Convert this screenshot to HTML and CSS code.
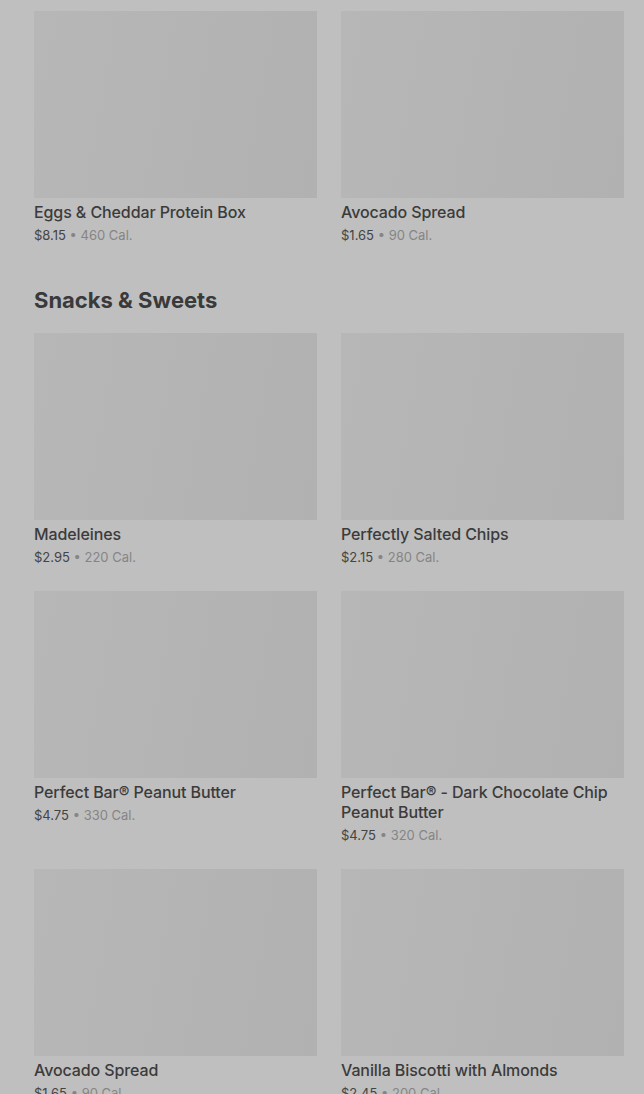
FILE: index.html
```html
<!DOCTYPE html>
<html lang="en">
<head>
    <meta charset="UTF-8">
    <meta name="viewport" content="width=device-width, initial-scale=1.0">
    <title>Menu</title>
    <link rel="stylesheet" href="styles.css">
</head>
<body>
    <div class="menu">
        <section class="section">
            <div class="grid">
                <div class="item">
                    <div class="thumb"></div>
                    <div class="name">Eggs &amp; Cheddar Protein Box</div>
                    <div class="meta"><span class="price">$8.15</span> • 460 Cal.</div>
                </div>
                <div class="item">
                    <div class="thumb"></div>
                    <div class="name">Avocado Spread</div>
                    <div class="meta"><span class="price">$1.65</span> • 90 Cal.</div>
                </div>
            </div>
        </section>

        <section class="section">
            <h2 class="section-title">Snacks &amp; Sweets</h2>
            <div class="grid">
                <div class="item">
                    <div class="thumb"></div>
                    <div class="name">Madeleines</div>
                    <div class="meta"><span class="price">$2.95</span> • 220 Cal.</div>
                </div>
                <div class="item">
                    <div class="thumb"></div>
                    <div class="name">Perfectly Salted Chips</div>
                    <div class="meta"><span class="price">$2.15</span> • 280 Cal.</div>
                </div>
                <div class="item">
                    <div class="thumb"></div>
                    <div class="name">Perfect Bar® Peanut Butter</div>
                    <div class="meta"><span class="price">$4.75</span> • 330 Cal.</div>
                </div>
                <div class="item">
                    <div class="thumb"></div>
                    <div class="name">Perfect Bar® - Dark Chocolate Chip Peanut Butter</div>
                    <div class="meta"><span class="price">$4.75</span> • 320 Cal.</div>
                </div>
                <div class="item">
                    <div class="thumb"></div>
                    <div class="name">Avocado Spread</div>
                    <div class="meta"><span class="price">$1.65</span> • 90 Cal.</div>
                </div>
                <div class="item">
                    <div class="thumb"></div>
                    <div class="name">Vanilla Biscotti with Almonds</div>
                    <div class="meta"><span class="price">$2.45</span> • 200 Cal.</div>
                </div>
            </div>
        </section>
    </div>
</body>
</html>
```

FILE: styles.css
```css
body {
    margin: 0;
    background-color: #bfbfbf;
    font-family: Inter, "Noto Sans", sans-serif;
    color: #3b3b3b;
    overflow: hidden;
}

.menu {
    padding: 11px 20px 0 34px;
}

.section + .section {
    margin-top: 42px;
}

.section-title {
    margin: 0 0 19px;
    font-size: 22px;
    line-height: 28px;
    font-weight: 700;
    color: #3a3a3a;
}

.grid {
    display: grid;
    grid-template-columns: 283px 283px;
    column-gap: 24px;
    row-gap: 25px;
}

.thumb {
    height: 187px;
    background: linear-gradient(100deg, #b7b7b7 0%, #b4b4b4 50%, #b1b1b1 100%);
}

.name {
    margin-top: 4px;
    font-size: 16px;
    line-height: 20px;
    font-weight: 500;
    letter-spacing: -0.1px;
    color: #3b3b3b;
}

.meta {
    margin-top: 4px;
    font-size: 13px;
    line-height: 18px;
    color: #858585;
}

.price {
    color: #444444;
}
```
